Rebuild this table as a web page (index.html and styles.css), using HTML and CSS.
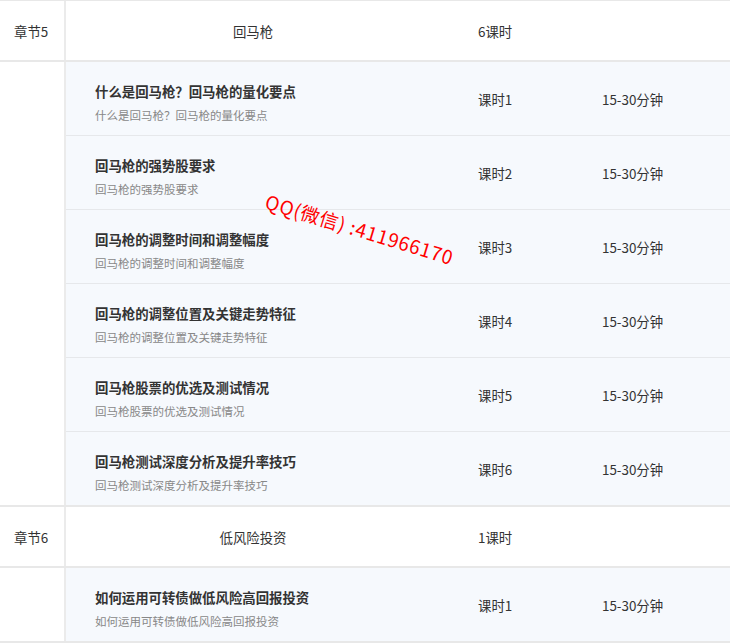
FILE: index.html
```html
<!DOCTYPE html>
<html lang="zh-CN">
<head>
  <meta charset="UTF-8">
  <title>课程目录</title>
  <meta name="viewport" content="width=device-width, initial-scale=1.0">
  <link rel="stylesheet" href="styles.css">
</head>
<body>
  <div class="catalog">
    <section class="chapter">
      <div class="chapter-head">
        <div class="col-num">章节5</div>
        <div class="col-title">回马枪</div>
        <div class="col-hours">6课时</div>
      </div>
      <div class="lessons-wrap">
        <div class="side"></div>
        <div class="lessons">
          <div class="lesson">
            <div class="lesson-title">
              <h3>什么是回马枪？回马枪的量化要点</h3>
              <p>什么是回马枪？回马枪的量化要点</p>
            </div>
            <div class="col-hours">课时1</div>
            <div class="col-time">15-30分钟</div>
          </div>
          <div class="lesson">
            <div class="lesson-title">
              <h3>回马枪的强势股要求</h3>
              <p>回马枪的强势股要求</p>
            </div>
            <div class="col-hours">课时2</div>
            <div class="col-time">15-30分钟</div>
          </div>
          <div class="lesson">
            <div class="lesson-title">
              <h3>回马枪的调整时间和调整幅度</h3>
              <p>回马枪的调整时间和调整幅度</p>
            </div>
            <div class="col-hours">课时3</div>
            <div class="col-time">15-30分钟</div>
          </div>
          <div class="lesson">
            <div class="lesson-title">
              <h3>回马枪的调整位置及关键走势特征</h3>
              <p>回马枪的调整位置及关键走势特征</p>
            </div>
            <div class="col-hours">课时4</div>
            <div class="col-time">15-30分钟</div>
          </div>
          <div class="lesson">
            <div class="lesson-title">
              <h3>回马枪股票的优选及测试情况</h3>
              <p>回马枪股票的优选及测试情况</p>
            </div>
            <div class="col-hours">课时5</div>
            <div class="col-time">15-30分钟</div>
          </div>
          <div class="lesson">
            <div class="lesson-title">
              <h3>回马枪测试深度分析及提升率技巧</h3>
              <p>回马枪测试深度分析及提升率技巧</p>
            </div>
            <div class="col-hours">课时6</div>
            <div class="col-time">15-30分钟</div>
          </div>
        </div>
      </div>
    </section>
    <section class="chapter">
      <div class="chapter-head">
        <div class="col-num">章节6</div>
        <div class="col-title">低风险投资</div>
        <div class="col-hours">1课时</div>
      </div>
      <div class="lessons-wrap">
        <div class="side"></div>
        <div class="lessons">
          <div class="lesson">
            <div class="lesson-title">
              <h3>如何运用可转债做低风险高回报投资</h3>
              <p>如何运用可转债做低风险高回报投资</p>
            </div>
            <div class="col-hours">课时1</div>
            <div class="col-time">15-30分钟</div>
          </div>
        </div>
      </div>
    </section>
    <div class="watermark">QQ(微信) :411966170</div>
  </div>
</body>
</html>
```

FILE: styles.css
```css
body {
  margin: 0;
  padding: 0;
  background: #fff;
  font-family: "Noto Sans CJK SC", "Noto Sans", sans-serif;
  color: #333;
}
.catalog {
  position: relative;
  border-top: 1px solid #e8e8e8;
  overflow: hidden;
}
.chapter-head {
  display: flex;
  align-items: center;
  height: 59px;
  border-bottom: 2px solid #e8e8e8;
  font-size: 13.4px;
}
.col-num {
  width: 50px;
  height: 100%;
  padding-left: 14px;
  display: flex;
  align-items: center;
  border-right: 2px solid #ebebeb;
}
.col-title {
  width: 374px;
  text-align: center;
}
.col-hours {
  width: 86px;
  padding-left: 38px;
  font-size: 13.4px;
}
.col-time {
  flex: 1;
  padding-left: 38px;
  font-size: 13.4px;
}
.lessons-wrap {
  display: flex;
  border-bottom: 2px solid #e8e8e8;
}
.side {
  width: 64px;
  border-right: 2px solid #ebebeb;
  background: #fff;
}
.lessons {
  flex: 1;
  background: #f6f9fd;
}
.lesson {
  display: flex;
  align-items: center;
  height: 73px;
  border-bottom: 1px solid #e6e8eb;
}
.lesson:last-child {
  border-bottom: none;
}
.lesson-title {
  width: 374px;
  height: 100%;
  padding: 21px 0 0 29px;
  box-sizing: border-box;
}
.lesson-title h3 {
  margin: 0;
  font-size: 13.4px;
  line-height: 16px;
  font-weight: bold;
  color: #333;
}
.lesson-title p {
  margin: 8px 0 0;
  font-size: 11.5px;
  line-height: 16px;
  color: #888;
}
/* overlay stamp */
.watermark {
  position: absolute;
  left: 270px;
  top: 187px;
  font-size: 19px;
  line-height: 26px;
  letter-spacing: 0.7px;
  color: #f00;
  white-space: nowrap;
  transform: rotate(17deg);
  transform-origin: left top;
}
```
